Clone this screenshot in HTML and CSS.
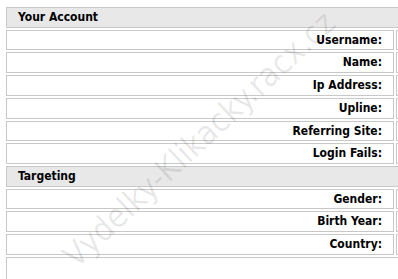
FILE: index.html
```html
<!DOCTYPE html>
<html>
<head>
<meta charset="utf-8">
<link rel="stylesheet" href="styles.css">
</head>
<body>
<div class="page">
  <table class="acct">
    <colgroup><col class="c-label"><col class="c-value"></colgroup>
    <tr><th colspan="2" class="head">Your Account</th></tr>
    <tr><td class="label">Username:</td><td class="value"></td></tr>
    <tr><td class="label">Name:</td><td class="value"></td></tr>
    <tr><td class="label">Ip Address:</td><td class="value"></td></tr>
    <tr><td class="label">Upline:</td><td class="value"></td></tr>
    <tr><td class="label">Referring Site:</td><td class="value"></td></tr>
    <tr><td class="label">Login Fails:</td><td class="value"></td></tr>
    <tr><th colspan="2" class="head">Targeting</th></tr>
    <tr><td class="label">Gender:</td><td class="value"></td></tr>
    <tr><td class="label">Birth Year:</td><td class="value"></td></tr>
    <tr><td class="label">Country:</td><td class="value"></td></tr>
    <tr><td colspan="2" class="tall"></td></tr>
  </table>
  <div class="watermark">Vydelky-Klikacky.racx.cz</div>
</div>
</body>
</html>
```
FILE: styles.css
```css
html, body {
  margin: 0;
  padding: 0;
  overflow: hidden;
  background: #fff;
}
body {
  font-family: "DejaVu Sans Condensed", "DejaVu Sans", sans-serif;
  font-stretch: condensed;
  font-size: 12px;
  color: #000;
}
.page {
  position: relative;
  padding: 5px 0 0 4px;
  height: 279px;
  box-sizing: border-box;
  overflow: hidden;
}
.acct {
  border-collapse: separate;
  border-spacing: 2px;
  table-layout: fixed;
  width: 600px;
}
.c-label { width: 388px; }
.c-value { width: 206px; }
.acct th,
.acct td {
  border: 1px solid #c8c8c8;
  line-height: 18.7px;
  padding: 0 11px;
  white-space: nowrap;
}
.head {
  background: #e8e8e8;
  text-align: left;
  font-weight: bold;
}
.label {
  text-align: right;
  font-weight: bold;
}
.tall {
  height: 40px;
}
.watermark {
  position: absolute;
  left: 199px;
  top: 139px;
  transform: translate(-50%, -50%) rotate(-43deg);
  font-size: 33px;
  color: rgba(0, 0, 0, 0.09);
  white-space: nowrap;
  pointer-events: none;
}
```
